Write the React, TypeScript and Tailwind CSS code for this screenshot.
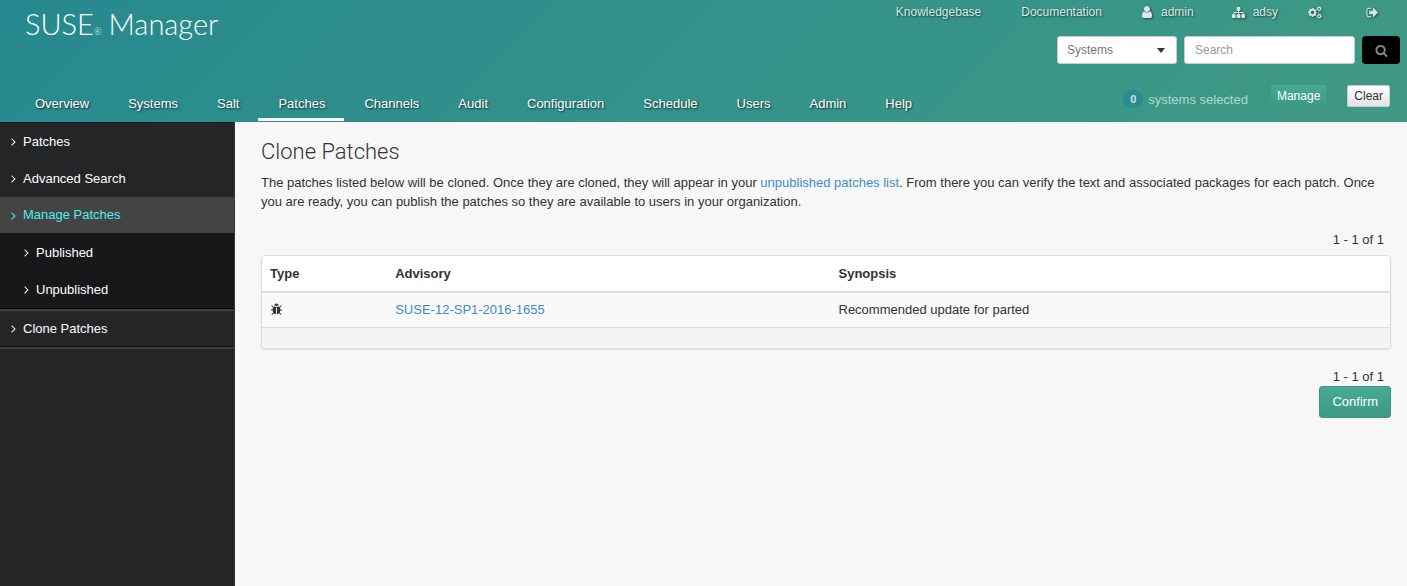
import type { ReactNode } from "react";

const paths = {
  user: "M1536 1399q0 109-62.5 187t-150.5 78h-854q-88 0-150.5-78t-62.5-187q0-85 8.5-160.5t31.5-152 58.5-131 94-89 134.5-34.5q131 128 313 128t313-128q76 0 134.5 34.5t94 89 58.5 131 31.5 152 8.5 160.5zm-256-887q0 159-112.5 271.5t-271.5 112.5-271.5-112.5-112.5-271.5 112.5-271.5 271.5-112.5 271.5 112.5 112.5 271.5z",
  sitemap:
    "M1792 1248v320q0 40-28 68t-68 28h-320q-40 0-68-28t-28-68v-320q0-40 28-68t68-28h96v-192h-512v192h96q40 0 68 28t28 68v320q0 40-28 68t-68 28h-320q-40 0-68-28t-28-68v-320q0-40 28-68t68-28h96v-192h-512v192h96q40 0 68 28t28 68v320q0 40-28 68t-68 28h-320q-40 0-68-28t-28-68v-320q0-40 28-68t68-28h96v-192q0-52 38-90t90-38h512v-192h-96q-40 0-68-28t-28-68v-320q0-40 28-68t68-28h320q40 0 68 28t28 68v320q0 40-28 68t-68 28h-96v192h512q52 0 90 38t38 90v192h96q40 0 68 28t28 68z",
  signOut:
    "M704 1440q0 4 1 20t.5 26.5-3 23.5-10 19.5-20.5 6.5h-320q-119 0-203.5-84.5t-84.5-203.5v-704q0-119 84.5-203.5t203.5-84.5h320q13 0 22.5 9.5t9.5 22.5q0 4 1 20t.5 26.5-3 23.5-10 19.5-20.5 6.5h-320q-66 0-113 47t-47 113v704q0 66 47 113t113 47h312l11.5 1 11.5 3 8 5.5 7 9 2 13.5zm928-544q0 26-19 45l-544 544q-19 19-45 19t-45-19-19-45v-288h-448q-26 0-45-19t-19-45v-384q0-26 19-45t45-19h448v-288q0-26 19-45t45-19 45 19l544 544q19 19 19 45z",
  search:
    "M1216 832q0-185-131.5-316.5t-316.5-131.5-316.5 131.5-131.5 316.5 131.5 316.5 316.5 131.5 316.5-131.5 131.5-316.5zm512 832q0 52-38 90t-90 38q-54 0-90-38l-343-342q-179 124-399 124-143 0-273.5-55.5t-225-150-150-225-55.5-273.5 55.5-273.5 150-225 225-150 273.5-55.5 273.5 55.5 225 150 150 225 55.5 273.5q0 220-124 399l343 343q37 37 37 90z",
  bug: "M1696 960q0 26-19 45t-45 19h-224q0 171-67 290l208 209q19 19 19 45t-19 45q-18 19-45 19t-45-19l-198-197q-5 5-15 13t-42 28.5-65 36.5-82 29-97 13v-896h-128v896q-51 0-101.5-13.5t-87-33-66-39-43.5-32.5l-15-14-183 207q-20 21-48 21-24 0-43-16-19-18-20.5-44.5t15.5-46.5l202-227q-58-114-58-274h-224q-26 0-45-19t-19-45 19-45 45-19h224v-294l-173-173q-19-19-19-45t19-45 45-19 45 19l173 173h844l173-173q19-19 45-19t45 19 19 45-19 45l-173 173v294h224q26 0 45 19t19 45zm-480-576h-640q0-133 93.5-226.5t226.5-93.5 226.5 93.5 93.5 226.5z",
  angle:
    "M1171 960q0 13-10 23l-466 466q-10 10-23 10t-23-10l-50-50q-10-10-10-23t10-23l393-393-393-393q-10-10-10-23t10-23l50-50q10-13 23-10t23 10l466 466q10 10 10 23z",
};

function Icon({ name, className }: { name: keyof typeof paths; className: string }) {
  return (
    <svg viewBox="0 0 1792 1792" fill="currentColor" aria-hidden="true" className={className}>
      <path d={paths[name]} />
    </svg>
  );
}

function Gears({ className }: { className: string }) {
  return (
    <svg viewBox="0 0 1920 1792" fill="none" stroke="currentColor" aria-hidden="true" className={className}>
      <circle cx="620" cy="896" r="360" strokeWidth="240" />
      <circle cx="620" cy="896" r="530" strokeWidth="170" strokeDasharray="216 200" strokeDashoffset="108" />
      <circle cx="1530" cy="390" r="200" strokeWidth="140" />
      <circle cx="1530" cy="390" r="300" strokeWidth="110" strokeDasharray="120 116" />
      <circle cx="1530" cy="1400" r="200" strokeWidth="140" />
      <circle cx="1530" cy="1400" r="300" strokeWidth="110" strokeDasharray="120 116" />
    </svg>
  );
}

const tabs = [
  "Overview",
  "Systems",
  "Salt",
  "Patches",
  "Channels",
  "Audit",
  "Configuration",
  "Schedule",
  "Users",
  "Admin",
  "Help",
];

function SideLink({ children, className }: { children: ReactNode; className: string }) {
  return (
    <a href="#" className={`flex items-center gap-[3px] ${className}`}>
      <Icon name="angle" className="size-[13px]" />
      {children}
    </a>
  );
}

function Header() {
  return (
    <header className="bg-linear-135 from-[#26898f] via-[#34928b] to-[#3f9983] text-white">
      <div className="flex justify-between">
        <a href="#" className="flex items-baseline pt-1 pl-[25px] font-[Lato] text-[29px] leading-[40px] font-light">
          SUSE<span className="text-[9px]">®</span>
          <span className="pl-[7px]">Manager</span>
        </a>
        <div className="flex flex-col items-end">
          <div className="flex h-6 items-center pr-7 text-[12px] text-[#d9e8e6] [text-shadow:1px_1px_2px_rgba(0,0,0,0.6)]">
            <a href="#" className="mr-10">Knowledgebase</a>
            <a href="#" className="mr-[38px]">Documentation</a>
            <a href="#" className="mr-[38px] flex items-center gap-[7px]">
              <Icon name="user" className="size-[14px] drop-shadow-[1px_1px_1px_rgba(0,0,0,0.5)]" />
              admin
            </a>
            <a href="#" className="mr-[30px] flex items-center gap-2">
              <Icon name="sitemap" className="size-[13px] drop-shadow-[1px_1px_1px_rgba(0,0,0,0.5)]" />
              adsy
            </a>
            <a href="#" aria-label="Preferences" className="mr-11">
              <Gears className="h-[13px] w-[14px] drop-shadow-[1px_1px_1px_rgba(0,0,0,0.5)]" />
            </a>
            <a href="#" aria-label="Sign out">
              <Icon name="signOut" className="size-[13px] drop-shadow-[1px_1px_1px_rgba(0,0,0,0.5)]" />
            </a>
          </div>
          <form className="mt-3 flex gap-[7px] pr-[7px] text-[12px]">
            <div className="grid w-[120px] items-center">
              <select
                aria-label="Search type"
                className="col-start-1 row-start-1 h-7 appearance-none rounded-[3px] border border-[#ccc] bg-white pl-[9px] text-[#777]"
              >
                <option>Systems</option>
              </select>
              <svg
                viewBox="0 0 8 5"
                aria-hidden="true"
                className="pointer-events-none col-start-1 row-start-1 mr-3 h-[5px] w-2 justify-self-end"
              >
                <path d="M0 0h8L4 5z" fill="#333" />
              </svg>
            </div>
            <input
              aria-label="Search"
              placeholder="Search"
              className="h-7 w-[171px] rounded-[3px] border border-[#ccc] bg-white px-[10px] text-[#555] placeholder:text-[#999]"
            />
            <button
              type="button"
              aria-label="Run search"
              className="flex h-7 w-[38px] items-center justify-center rounded bg-black text-[#888]"
            >
              <Icon name="search" className="size-[13px]" />
            </button>
          </form>
        </div>
      </div>

      <div className="flex items-end justify-between pt-[21px]">
        <nav className="flex pl-[15px] text-[13px] leading-[18px] [text-shadow:1px_1px_2px_rgba(0,0,0,0.7)]">
          {tabs.map((tab) => (
            <a
              key={tab}
              href="#"
              className={`mb-px border-b-3 pt-1 pr-[19px] pb-[5px] pl-5 ${tab === "Patches" ? "border-white" : "border-transparent"}`}
            >
              {tab}
            </a>
          ))}
        </nav>
        <div className="flex h-[37px] items-start pr-[17px] text-[12px]">
          <span className="mt-[5px] flex h-[18px] w-5 items-center justify-center rounded-full bg-[#2b8b8f] text-[11px] font-bold text-[#cfe6e3]">
            0
          </span>
          <span className="mt-[6px] mr-[23px] ml-[5px] text-[13px] leading-[18px] text-[#b2d8d1]">systems selected</span>
          <button
            type="button"
            className="mr-[21px] h-[22px] rounded-xs bg-linear-to-b from-[#47aa96] to-[#3d9884] px-[6px]"
          >
            Manage
          </button>
          <button
            type="button"
            className="h-[22px] rounded-xs border border-[#ccc] bg-linear-to-b from-white to-[#e4e4e4] px-[6px] text-[#333]"
          >
            Clear
          </button>
        </div>
      </div>
    </header>
  );
}

function Sidebar() {
  return (
    <aside className="w-[235px] shrink-0 border-t border-r border-t-[#17181a] border-r-[#333436] bg-[#242527] text-[13px] text-white">
      <SideLink className="h-[37px] pl-[7px]">Patches</SideLink>
      <SideLink className="h-[37px] pl-[7px]">Advanced Search</SideLink>
      <SideLink className="h-9 bg-[#444] pl-[7px] text-[#4deeee]">Manage Patches</SideLink>
      <div className="border-b border-black bg-[#17181a] pt-px">
        <SideLink className="h-[37px] pl-5">Published</SideLink>
        <SideLink className="h-[37px] pl-5">Unpublished</SideLink>
      </div>
      <div className="border-t-2 border-b border-t-[#3c3d3f] border-b-[#111]">
        <SideLink className="h-[35px] pl-[7px]">Clone Patches</SideLink>
      </div>
      <div className="h-[2px] bg-[#3c3d3f]" />
    </aside>
  );
}

export default function App() {
  return (
    <div className="flex min-h-screen flex-col bg-[#f7f7f7] font-['Liberation_Sans',Arial,sans-serif] text-[13px] text-[#333]">
      <Header />
      <div className="flex grow">
        <Sidebar />
        <main className="min-w-0 grow pr-4 pl-[26px]">
          <h1 className="pt-4 font-[Roboto] text-[22px] leading-[27px] font-light">Clone Patches</h1>
          <p className="mt-2 leading-[19px]">
            The patches listed below will be cloned. Once they are cloned, they will appear in your{" "}
            <a href="#" className="text-[#428bca]">unpublished patches list</a>. From there you can verify the text and
            associated packages for each patch. Once you are ready, you can publish the patches so they are available to
            users in your organization.
          </p>
          <p className="mt-5 pr-[7px] text-right leading-[18px]">1 - 1 of 1</p>
          <div className="mt-[6px] overflow-hidden rounded border border-[#ddd] bg-white shadow-[0_1px_2px_rgba(0,0,0,0.1)]">
            <table className="w-full table-fixed text-left leading-[18px]">
              <thead>
                <tr className="h-9 border-b-2 border-[#ddd]">
                  <th className="w-[11.1%] px-2">Type</th>
                  <th className="w-[39.3%] px-2">Advisory</th>
                  <th className="px-2">Synopsis</th>
                </tr>
              </thead>
              <tbody>
                <tr className="h-[35px] border-b border-[#ddd] bg-[#f9f9f9]">
                  <td className="px-2">
                    <Icon name="bug" className="size-[13px]" />
                  </td>
                  <td className="px-2">
                    <a href="#" className="text-[#428bca]">SUSE-12-SP1-2016-1655</a>
                  </td>
                  <td className="px-2">Recommended update for parted</td>
                </tr>
              </tbody>
            </table>
            <div className="h-5 bg-[#f4f4f4]" />
          </div>
          <div className="mt-[19px] flex flex-col items-end">
            <p className="pr-[7px] leading-[18px]">1 - 1 of 1</p>
            <button
              type="button"
              className="h-8 rounded-[3px] border border-[#3d9884] bg-linear-to-b from-[#47aa96] to-[#3d9884] px-3 text-white"
            >
              Confirm
            </button>
          </div>
        </main>
      </div>
    </div>
  );
}
